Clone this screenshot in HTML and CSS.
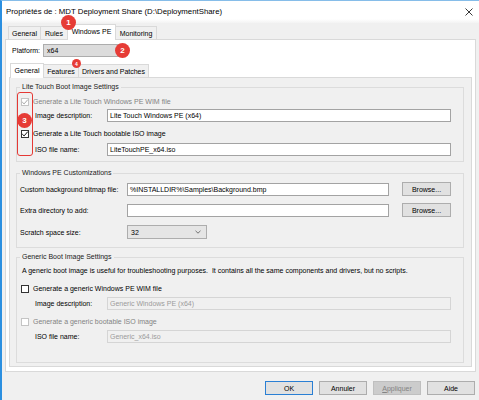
FILE: index.html
```html
<!DOCTYPE html>
<html>
<head>
  <meta charset="utf-8">
  <title>Propriétés de : MDT Deployment Share</title>
  <link rel="stylesheet" href="styles.css">
</head>
<body>
  <div class="window">
    <div class="titlebar">
      <span class="title">Propriétés de : MDT Deployment Share (D:\DeploymentShare)</span>
      <svg class="close" width="8" height="8" viewBox="0 0 8 8"><path d="M0.5 0.5 L7.5 7.5 M7.5 0.5 L0.5 7.5" stroke="#222" stroke-width="0.9"/></svg>
    </div>

    <div class="tabs outer-tabs">
      <div class="tab w-general">General</div>
      <div class="tab w-rules">Rules</div>
      <div class="tab active w-winpe">Windows PE</div>
      <div class="tab w-monitoring">Monitoring</div>
    </div>

    <div class="page outer-page">
      <div class="platform-row">
        <span class="platform-label">Platform:</span>
        <div class="combo platform">x64</div>
      </div>

      <div class="tabs inner-tabs">
        <div class="tab active w-igeneral">General</div>
        <div class="tab w-features">Features</div>
        <div class="tab w-drivers">Drivers and Patches</div>
      </div>

      <div class="page inner-page">
        <fieldset class="group g-lite">
          <legend>Lite Touch Boot Image Settings</legend>
          <div class="row h11 mt4">
            <span class="cb disabled"><svg width="8" height="8" viewBox="0 0 8 8"><path d="M1.2 4 L3.1 5.9 L6.8 1.6" fill="none" stroke="#a8a8a8" stroke-width="1"/></svg></span>
            <span class="muted">Generate a Lite Touch Windows PE WIM file</span>
          </div>
          <div class="row h13 mt2">
            <span class="label indent">Image description:</span>
            <div class="textbox wide">Lite Touch Windows PE (x64)</div>
          </div>
          <div class="row h11 mt6">
            <span class="cb"><svg width="8" height="8" viewBox="0 0 8 8"><path d="M1.2 4 L3.1 5.9 L6.8 1.6" fill="none" stroke="#111" stroke-width="1"/></svg></span>
            <span>Generate a Lite Touch bootable ISO image</span>
          </div>
          <div class="row h13 mt4">
            <span class="label indent">ISO file name:</span>
            <div class="textbox wide">LiteTouchPE_x64.iso</div>
          </div>
        </fieldset>

        <fieldset class="group g-custom">
          <legend>Windows PE Customizations</legend>
          <div class="row h14 mt4">
            <span class="label short">Custom background bitmap file:</span>
            <div class="textbox path">%INSTALLDIR%\Samples\Background.bmp</div>
            <div class="button browse">Browse...</div>
          </div>
          <div class="row h14 mt7">
            <span class="label short">Extra directory to add:</span>
            <div class="textbox path"></div>
            <div class="button browse">Browse...</div>
          </div>
          <div class="row h14 mt8">
            <span class="label short">Scratch space size:</span>
            <div class="combo scratch">
              <span>32</span>
              <svg width="6" height="4" viewBox="0 0 6 4"><path d="M0.5 0.8 L3 3.2 L5.5 0.8" fill="none" stroke="#555" stroke-width="0.8"/></svg>
            </div>
          </div>
        </fieldset>

        <fieldset class="group g-generic">
          <legend>Generic Boot Image Settings</legend>
          <div class="row h11 mt3">
            <span class="note">A generic boot image is useful for troubleshooting purposes.&nbsp; It contains all the same components and drivers, but no scripts.</span>
          </div>
          <div class="row h11 mt7">
            <span class="cb"></span>
            <span>Generate a generic Windows PE WIM file</span>
          </div>
          <div class="row h13 mt3">
            <span class="label indent">Image description:</span>
            <div class="textbox wide off">Generic Windows PE (x64)</div>
          </div>
          <div class="row h11 mt6">
            <span class="cb disabled"></span>
            <span class="muted">Generate a generic bootable ISO image</span>
          </div>
          <div class="row h13 mt3">
            <span class="label indent">ISO file name:</span>
            <div class="textbox wide off">Generic_x64.iso</div>
          </div>
        </fieldset>
      </div>
    </div>

    <div class="buttons">
      <div class="button default">OK</div>
      <div class="button">Annuler</div>
      <div class="button disabled"><u>A</u>ppliquer</div>
      <div class="button">Aide</div>
    </div>

    <!-- annotations -->
    <div class="mark box-3"></div>
    <div class="badge b1">1</div>
    <div class="badge b2">2</div>
    <div class="badge b3">3</div>
    <div class="badge small b4">4</div>
  </div>
</body>
</html>
```

FILE: styles.css
```css
* {
  box-sizing: border-box;
}
body {
  margin: 0;
  width: 479px;
  height: 400px;
  overflow: hidden;
  font-family: "Liberation Sans", Arial, sans-serif;
  font-size: 7px;
  color: #000;
  background-color: #f0f0f0;
}
.window {
  position: relative;
  height: 400px;
  border-top: 1px solid #86bde9;
  border-left: 2px solid #2b8fe0;
  background-color: #f0f0f0;
  display: flex;
  flex-direction: column;
}
.titlebar {
  height: 22px;
  background: linear-gradient(#fff 0, #fff 18px, #f3f3f3 22px);
  display: flex;
  align-items: center;
  justify-content: space-between;
  padding: 0 5px 1px 4px;
}
.title {
  font-size: 7.8px;
}
.close {
  margin-right: 1px;
}

/* tabs */
.tabs {
  display: flex;
  align-items: flex-end;
  position: relative;
  z-index: 1;
}
.outer-tabs {
  margin-top: 1px;
  height: 15px;
  padding-left: 6px;
}
.inner-tabs {
  margin-top: 6px;
  height: 14px;
  padding-left: 4px;
}
.tab {
  height: 13px;
  display: flex;
  align-items: center;
  justify-content: center;
  border: 1px solid #d9d9d9;
  border-bottom: none;
  border-right: none;
  background-color: #f0f0f0;
  white-space: nowrap;
}
.tab:last-child {
  border-right: 1px solid #d9d9d9;
}
.tab.active {
  height: 16px;
  margin-bottom: -1px;
  background-color: #fff;
  border-right: 1px solid #d9d9d9;
  padding-bottom: 2px;
}
.tab.active + .tab {
  border-left: none;
}
.inner-tabs .tab.active {
  height: 15px;
  padding-bottom: 1px;
}
.w-general { width: 32px; }
.w-rules { width: 27px; }
.w-winpe { width: 49px; }
.w-monitoring { width: 41px; }
.w-igeneral { width: 34px; }
.w-features { width: 34px; }
.w-drivers { width: 71px; }

/* pages */
.page {
  border: 1px solid #d9d9d9;
}
.outer-page {
  height: 333px;
  margin: 0 3px;
  background-color: #fff;
}
.inner-page {
  height: 290px;
  margin: 0 3px;
  padding: 4px 7px 0 6px;
  background-color: #f0f0f0;
}
.platform-row {
  display: flex;
  align-items: center;
  height: 13px;
  margin-top: 4px;
  padding-left: 6px;
}
.platform-label {
  width: 31px;
}

/* group boxes */
.group {
  margin: 0;
  padding: 0;
  border: 1px solid #dcdcdc;
  min-width: 0;
}
.group legend {
  margin-left: 3px;
  padding: 0 2px;
  line-height: 10px;
  height: 10px;
  color: #222;
}
.g-lite { padding-bottom: 5px; }
.g-custom { margin-top: 6px; padding-bottom: 8px; }
.g-generic { margin-top: 4px; padding-bottom: 19px; }

.row {
  display: flex;
  align-items: center;
  white-space: nowrap;
}
.h11 { height: 11px; }
.h13 { height: 13px; }
.h14 { height: 14px; }
.mt2 { margin-top: 2px; }
.mt3 { margin-top: 3px; }
.mt4 { margin-top: 4px; }
.mt6 { margin-top: 6px; }
.mt7 { margin-top: 7px; }
.mt8 { margin-top: 8px; }

.label.indent {
  width: 90px;
  padding-left: 18px;
}
.label.short {
  width: 110px;
  padding-left: 3px;
}
.note {
  padding-left: 5px;
}
.muted {
  color: #838383;
}

.cb {
  width: 8px;
  height: 8px;
  margin: 0 4px;
  border: 1px solid #333;
  background-color: #fff;
  display: flex;
  align-items: center;
  justify-content: center;
}
.cb svg {
  flex: none;
}
.cb.disabled {
  border-color: #c4c4c4;
}

/* inputs */
.textbox {
  height: 13px;
  border: 1px solid #a3a3a3;
  background-color: #fff;
  padding-left: 2px;
  display: flex;
  align-items: center;
  overflow: hidden;
}
.textbox.wide {
  width: 344px;
}
.textbox.path {
  width: 262px;
}
.textbox.off {
  background-color: #f0f0f0;
  border-color: #d5d5d5;
  color: #9b9b9b;
}
.combo {
  height: 13px;
  border: 1px solid #adadad;
  background-color: #e1e1e1;
  display: flex;
  align-items: center;
  padding-left: 3px;
}
.combo.platform {
  width: 82px;
  background-color: #dcdcdc;
}
.combo.scratch {
  width: 80px;
  height: 14px;
  justify-content: space-between;
  padding-right: 5px;
  background-color: #e5e5e5;
}

/* buttons */
.button {
  height: 14px;
  width: 48px;
  border: 1px solid #adadad;
  background-color: #e1e1e1;
  display: flex;
  align-items: center;
  justify-content: center;
}
.browse {
  width: 49px;
  margin-left: 13px;
}
.buttons {
  display: flex;
  justify-content: flex-end;
  gap: 6px;
  margin-top: 9px;
  padding-right: 4px;
}
.button.default {
  border-color: #2a7fd4;
}
.button.disabled {
  background-color: #cccccc;
  border-color: #bfbfbf;
  color: #838383;
}

/* red annotations */
.badge {
  position: absolute;
  width: 15px;
  height: 15px;
  border-radius: 50%;
  background-color: #e63c36;
  color: #fff;
  font-weight: bold;
  font-size: 8px;
  display: flex;
  align-items: center;
  justify-content: center;
  z-index: 3;
}
.badge.small {
  width: 9px;
  height: 9px;
  font-size: 5px;
}
.b1 { left: 59px; top: 14px; }
.b2 { left: 113px; top: 42px; }
.b3 { left: 15px; top: 112px; }
.b4 { left: 70px; top: 58px; }
.mark {
  position: absolute;
  border: 1.5px solid #e53935;
  border-radius: 3px;
  z-index: 2;
}
.box-3 {
  left: 15px;
  top: 91px;
  width: 16px;
  height: 64px;
}
```
